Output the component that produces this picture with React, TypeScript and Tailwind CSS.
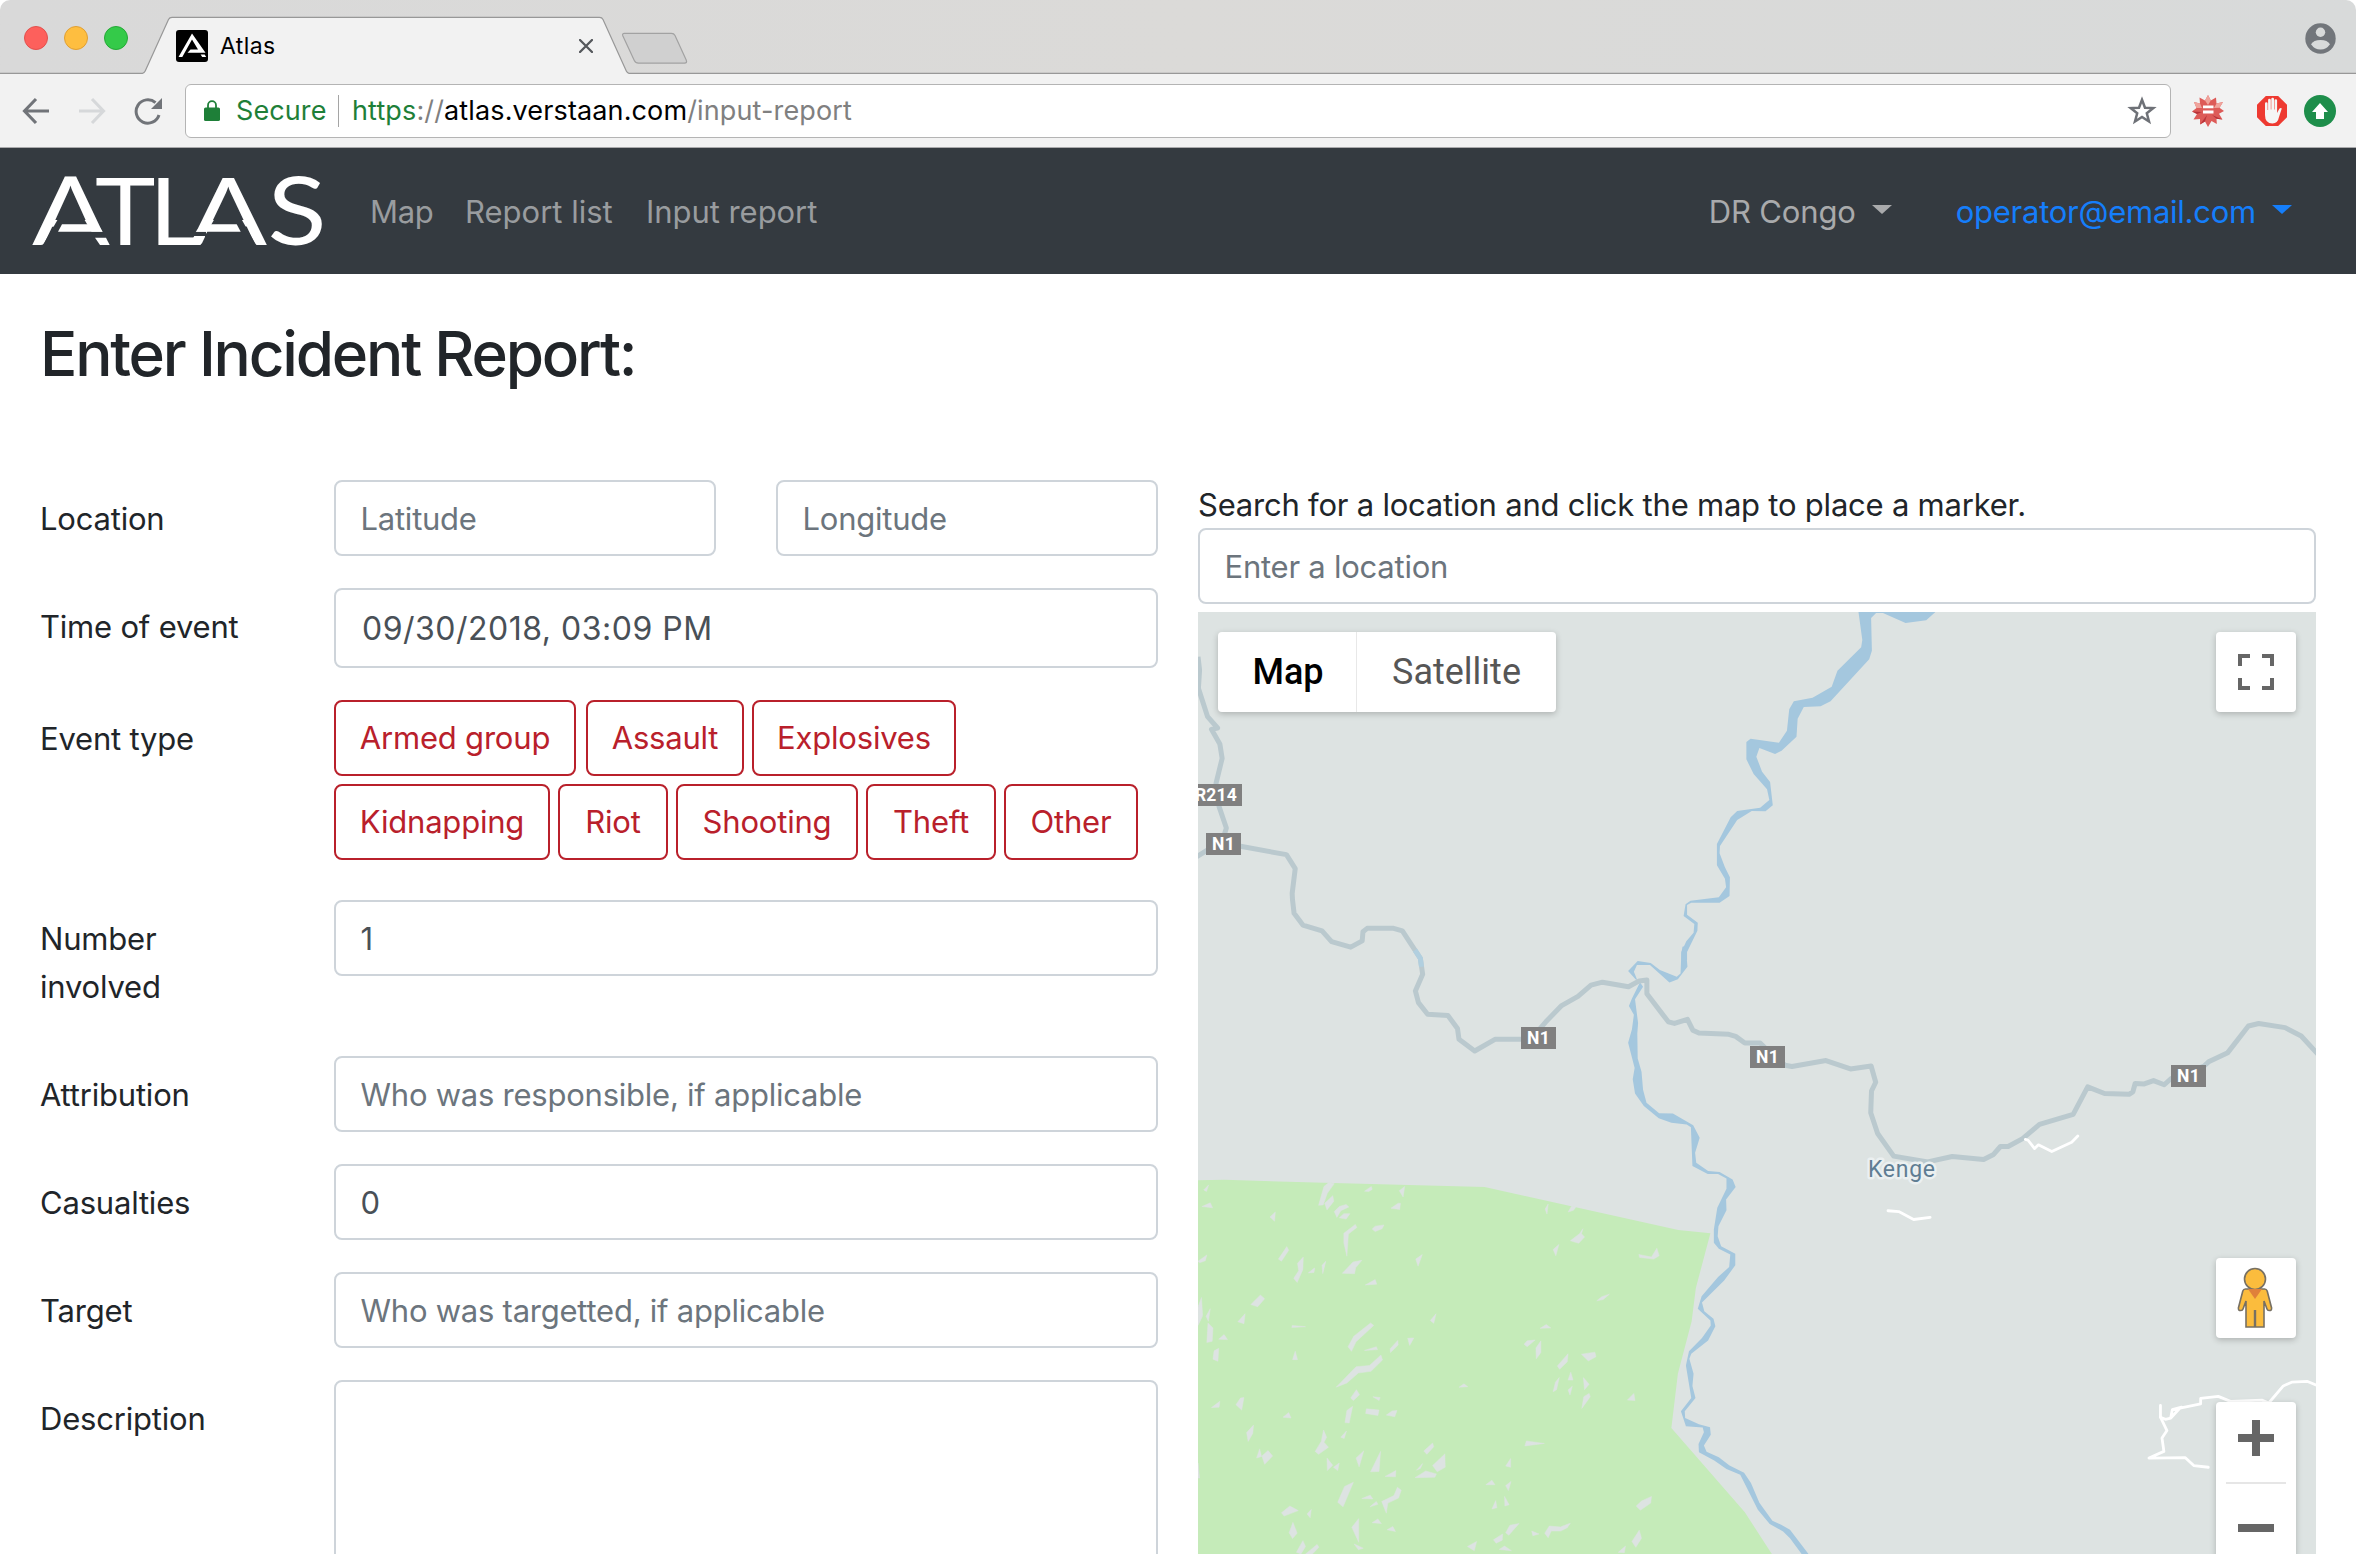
import React from "react";

const field =
  "block w-full h-[76px] rounded-[8px] border-2 border-[#ced4da] bg-white px-[24.5px] text-[31px] tracking-[-0.24px] text-[#495057] placeholder:text-[#6c757d] placeholder:opacity-100 outline-none";

/* ---------- browser chrome ---------- */

function AtlasFavicon() {
  return (
    <svg className="h-8 w-8" viewBox="0 0 32 32">
      <rect width="32" height="32" rx="3" fill="#000" />
      <path d="M2.5 27 16 3.5 29.5 22.7H11.5L14.5 19.6H22L16 9.5 6.3 27Z" fill="#fff" />
      <path d="M24.6 24.4h4L30.2 27h-4Z" fill="#fff" />
    </svg>
  );
}

function TabStrip() {
  return (
    <div className="relative flex h-[74px] w-full shrink-0 items-center rounded-t-[10px] bg-gradient-to-r from-[#d9d9d9] via-[#dbdad8] to-[#d8dada]">
      <svg className="absolute inset-0 h-[74px] w-[2356px]" viewBox="0 0 2356 74">
        <path
          d="M0 73.3H142.5Q144.3 73 145.2 71L168.5 19.5Q169.6 17.4 172 17.4H599.5Q602 17.4 603 19.5L626.3 71Q627.2 73 629 73.3H2356V74H0Z"
          fill="#f2f2f2"
        />
        <path
          d="M0 73.3H142.5Q144.3 73 145.2 71L168.5 19.5Q169.6 17.4 172 17.4H599.5Q602 17.4 603 19.5L626.3 71Q627.2 73 629 73.3H2356"
          fill="none"
          stroke="#989898"
          strokeWidth="1.2"
        />
        <path
          d="M624.5 33.4H671.5Q674 33.4 675 35.5L686.2 60Q687.5 63.2 684.5 63.2H638.5Q635.5 63.2 634.3 60.5L622.9 36Q621.8 33.4 624.5 33.4Z"
          fill="#d0d0d0"
          stroke="#a2a2a2"
          strokeWidth="1.2"
        />
      </svg>
      <div className="relative flex h-full w-full items-center">
        <div className="ml-6 mt-[2px] flex gap-4">
          <span className="h-6 w-6 rounded-full border border-[#e2504d] bg-[#fd605c]" />
          <span className="h-6 w-6 rounded-full border border-[#e09f33] bg-[#febe40]" />
          <span className="h-6 w-6 rounded-full border border-[#24a936] bg-[#34ca49]" />
        </div>
        <div className="ml-[48px] mt-[18px] flex h-8 w-[417px] items-center">
          <AtlasFavicon />
          <span className="ml-3 text-[23px] tracking-[0.4px] text-black">Atlas</span>
          <svg className="ml-auto h-[14px] w-[14px]" viewBox="0 0 14 14">
            <path d="M1 1 13 13M13 1 1 13" stroke="#55585c" strokeWidth="2.3" strokeLinecap="round" />
          </svg>
        </div>
        <svg className="ml-auto mr-[20px] mt-[2px] h-[31px] w-[31px]" viewBox="0 0 31 31">
          <circle cx="15.5" cy="15.5" r="15.2" fill="#72767b" />
          <circle cx="15.5" cy="9.3" r="4.7" fill="#d8dada" />
          <path d="M6 21.3Q8.5 17 15.5 17T25 21.3Q21.5 26.5 15.5 26.5T6 21.3Z" fill="#d8dada" />
        </svg>
      </div>
    </div>
  );
}

function Toolbar() {
  return (
    <div className="flex h-[74px] shrink-0 items-center border-b-[1.5px] border-[#aaaaac] bg-[#f2f2f2]">
      <svg className="ml-[22px] h-[28px] w-[28px]" viewBox="0 0 28 28" fill="none" stroke="#717479" strokeWidth="3.1">
        <path d="M27 14H3M14 2 2.5 14 14 26" />
      </svg>
      <svg className="ml-[28px] h-[28px] w-[28px]" viewBox="0 0 28 28" fill="none" stroke="#d6d8da" strokeWidth="3.1">
        <path d="M1 14H25M14 2 25.5 14 14 26" />
      </svg>
      <svg className="ml-[28px] h-[28px] w-[29px]" viewBox="0 0 29 28">
        <path d="M21.5 5.6A11.7 11.7 0 1 0 25 18" fill="none" stroke="#717479" strokeWidth="3" />
        <path d="M28 1V12H17Z" fill="#717479" />
      </svg>
      <div className="ml-[22px] flex h-[54px] w-[1986px] items-center rounded-[6px] border-[1.5px] border-[#b4b4b4] bg-white">
        <svg className="ml-[18px] h-[21px] w-[16px]" viewBox="0 0 16 21">
          <rect y="7.5" width="16" height="13.5" rx="1.6" fill="#1e7f38" />
          <path d="M4 9V5.2a4 4 0 0 1 8 0V9" fill="none" stroke="#1e7f38" strokeWidth="1.8" />
        </svg>
        <span className="ml-[16px] w-[90px] whitespace-nowrap pt-[2px] text-[27px] tracking-[0.1px] text-[#1e7f38]">Secure</span>
        <span className="ml-[12px] h-8 w-px bg-[#a5a5a5]" />
        <span className="ml-[13px] whitespace-nowrap pt-[2px] text-[27px] tracking-[0.13px] text-[#808080]">
          <span className="text-[#1e7f38]">https</span>://<span className="text-black">atlas.verstaan.com</span>/input-report
        </span>
        <svg className="ml-auto mr-[13px] h-[30px] w-[30px]" viewBox="0 0 30 30">
          <path
            d="M15 3.8 18 11.7 26.3 12.1 19.8 17.3 22 25.5 15 20.9 8 25.5 10.2 17.3 3.7 12.1 12 11.7Z"
            fill="none"
            stroke="#6e7177"
            strokeWidth="2.5"
          />
        </svg>
      </div>
      <svg className="ml-[21px] h-[32px] w-[32px]" viewBox="0 0 32 32">
        <path
          d="M16 0 18.8 5.5 24 2.4 24.5 8.5 31 7 27.5 12.8 32 16 27 18.7 30.5 24.5 24.5 23.8 24.8 29 19.5 26 16 32 13 26.5 8 29.5 8 24 1.5 24.5 5 19 0 16.5 4.5 13 2 7 8 8.5 7.5 2.5 13 5.5Z"
          fill="#dd5b58"
        />
        <path d="M16 0 18.8 5.5 16 10 13 5.5ZM31 7 27.5 12.8 22 13 24.5 8.5ZM2 7 8 8.5 10 13 4.5 13Z" fill="#f0a49c" />
        <path d="M0 16.5 10 17 5 19ZM8 29.5 15 20 13 26.5ZM30.500 24.5 20 20 24.5 23.8Z" fill="#b8343a" />
        <path d="M11 11.8H21.500M11 17H21.5" stroke="#fff" strokeWidth="2.8" />
      </svg>
      <svg className="ml-[33px] h-[30px] w-[30px]" viewBox="0 0 30 30">
        <path d="M8.8 0H21.2L30 8.8V21.2L21.2 30H8.8L0 21.2V8.8Z" fill="#ee3a31" />
        <path
          d="M8 19V7.5a1.3 1.3 0 0 1 2.6 0V14h.5V4a1.3 1.3 0 0 1 2.7 0v9.5h.5V3a1.3 1.3 0 0 1 2.7 0v10.5h.5V4.5a1.3 1.3 0 0 1 2.6 0V17l2.2-4.2q1.6-1.6 2.5-.2L22 21q-1.2 6.5-6.5 6.5Q8 27.5 8 19Z"
          fill="#f5f5f5"
        />
      </svg>
      <svg className="ml-[17px] h-8 w-8" viewBox="0 0 32 32">
        <circle cx="16" cy="16" r="16" fill="#1e8e4b" />
        <path d="M16 8 24 17H20V24H12V17H8Z" fill="#fff" />
      </svg>
    </div>
  );
}

/* ---------- site navigation ---------- */

function AtlasLogo() {
  return (
    <svg className="h-[126px] w-[296px]" viewBox="30 148 296 126" fontFamily="Lato" fontSize="94" fill="#fff">
      <text transform="translate(32 245) scale(1.21 1)">A</text>
      <path d="M71 196.7 94 236 94 246H42.3Z" fill="#343a40" />
      <path d="M90 231.7H112V246H90Z" fill="#343a40" />
      <path d="M62 224.3H88L95 220 102.7 231.7H58Z" />
      <path d="M95 237.7H106L109.7 245H100Z" />
      <text transform="translate(95 245) scale(1.09 1)">T</text>
      <text transform="translate(149 245) scale(1.1 1)">L</text>
      <text transform="translate(189.5 245) scale(1.22 1)">A</text>
      <path d="M227.7 195 256.7 246H205V236Z" fill="#343a40" />
      <path d="M188 231.7H206V236H188Z" fill="#343a40" />
      <path d="M202 224.3H236.7L240.7 231.7H195.7Z" />
      <text transform="translate(267.5 245) scale(1.16 1)">S</text>
    </svg>
  );
}

function Caret() {
  return <span className="ml-4 mb-[6px] h-0 w-0 border-x-[10px] border-t-[9px] border-x-transparent border-t-current" />;
}

function Navbar() {
  return (
    <nav className="flex h-[126px] shrink-0 items-center bg-[#343a40] pl-[30px] pr-[64px] text-[31px] text-[#999c9f]">
      <AtlasLogo />
      <div className="ml-[44px] flex gap-8 pt-[3px]">
        <a className="w-[63px] whitespace-nowrap tracking-[-0.3px]">Map</a>
        <a className="w-[149px] whitespace-nowrap">Report list</a>
        <a className="whitespace-nowrap tracking-[-0.05px]">Input report</a>
      </div>
      <div className="ml-auto flex items-center gap-16 pt-[3px]">
        <a className="flex items-center tracking-[-0.15px] text-[#a9aaac]">
          DR Congo
          <Caret />
        </a>
        <a className="flex items-center tracking-[-0.25px] text-[#157efb]">
          operator@email.com
          <Caret />
        </a>
      </div>
    </nav>
  );
}

/* ---------- form ---------- */

function Row({ label, className, children }: { label: string; className: string; children: React.ReactNode }) {
  return (
    <div className={"flex " + className}>
      <label className="w-[294px] shrink-0 pt-[15px] leading-[48px] tracking-[-0.2px] whitespace-pre">{label}</label>
      <div className="w-[824px]">{children}</div>
    </div>
  );
}

function TypeButton({ w, children }: { w: string; children: string }) {
  return (
    <button
      className={
        "flex h-[76px] items-center justify-center rounded-[8px] border-2 border-[#b9202b] pt-px text-[31px] tracking-[-0.2px] whitespace-nowrap text-[#b9202b] " +
        w
      }
    >
      {children}
    </button>
  );
}

function ReportForm() {
  return (
    <form className="w-[1118px]">
      <Row label="Location" className="mb-8">
        <div className="flex justify-between">
          <div className="w-[382px]">
            <input className={field} placeholder="Latitude" />
          </div>
          <div className="w-[382px]">
            <input className={field} placeholder="Longitude" />
          </div>
        </div>
      </Row>
      <Row label="Time of event" className="mb-8">
        <div className="flex h-20 items-center rounded-[8px] border-2 border-[#ced4da] bg-white px-[26px] pt-[2px] text-[32px] tracking-[0.5px] text-[#495057]">
          09/30/2018, 03:09 PM
        </div>
      </Row>
      <Row label="Event type" className="mb-10">
        <div className="flex">
          <TypeButton w="w-[242px]">Armed group</TypeButton>
          <TypeButton w="w-[158px] ml-[10px]">Assault</TypeButton>
          <TypeButton w="w-[204px] ml-2">Explosives</TypeButton>
        </div>
        <div className="mt-2 flex gap-2">
          <TypeButton w="w-[216px]">Kidnapping</TypeButton>
          <TypeButton w="w-[110px]">Riot</TypeButton>
          <TypeButton w="w-[182px]">Shooting</TypeButton>
          <TypeButton w="w-[130px]">Theft</TypeButton>
          <TypeButton w="w-[134px]">Other</TypeButton>
        </div>
      </Row>
      <Row label={"Number\ninvolved"} className="h-[156px]">
        <input className={field} defaultValue="1" />
      </Row>
      <Row label="Attribution" className="mb-8">
        <input className={field} placeholder="Who was responsible, if applicable" />
      </Row>
      <Row label="Casualties" className="mb-8">
        <input className={field} defaultValue="0" />
      </Row>
      <Row label="Target" className="mb-8">
        <input className={field} placeholder="Who was targetted, if applicable" />
      </Row>
      <Row label="Description" className="">
        <textarea className="block h-[248px] w-full resize-none rounded-[8px] border-2 border-[#ced4da] outline-none" />
      </Row>
    </form>
  );
}

/* ---------- map ---------- */

const clearings =
  "M36 695 49 683 43 699ZM31 735 53 726 59 738ZM209 760 223 748 221 770ZM336 732 350 687 362 678 377 680 359 703 348 731ZM352 727 373 709 376 722 358 743ZM377 747 390 735 408 730 415 736 394 745 384 761ZM390 762 402 752 418 752 408 765ZM456 698 474 687 476 694 467 699ZM547 697 561 687 557 712ZM525 739 544 727 550 727 548 742ZM476 789 484 782 507 779 502 788 484 795ZM402 799 432 778 436 785 414 801 410 854 402 822ZM231 861 253 831 258 840 239 866ZM21 866 44 851 40 865 25 870ZM281 871 296 856 295 886 280 917 271 907 284 889ZM309 894 326 882 324 893ZM345 876 355 866 347 896ZM398 895 426 868 449 864 433 882 430 896ZM590 861 607 850 596 878ZM458 923 484 910 488 921ZM159 970 184 947 195 956 177 975ZM125 1011 144 992 141 1016ZM21 975 30 953 33 997 21 1020ZM42 998 53 980 48 1010ZM47 1014 60 1026 58 1058 44 1061ZM75 1053 89 1042 98 1054ZM63 1081 75 1075 73 1106 60 1101ZM267 1020 302 1023 266 1025ZM268 1102 275 1082 281 1102ZM413 1071 428 1046 472 1014 480 1020 434 1059 422 1082ZM456 1080 487 1071 490 1078ZM523 1076 543 1056 544 1067 524 1085ZM569 1051 585 1050 574 1068ZM628 1008 643 992 637 1015ZM382 1168 434 1119 469 1116 499 1091 503 1103 473 1130 440 1134 410 1158ZM420 1194 435 1174 443 1186 427 1200ZM478 1191 497 1193 494 1200ZM461 1220 494 1223 491 1236 459 1231ZM513 1235 528 1225 541 1224 535 1239ZM405 1253 410 1224 425 1214 416 1254ZM394 1288 409 1273 403 1291ZM56 1217 78 1202 76 1216ZM120 1210 132 1194 141 1193 135 1223ZM243 1240 258 1229 264 1242ZM148 1277 166 1259 164 1279 152 1298ZM174 1338 182 1316 187 1334ZM188 1333 204 1320 216 1333 195 1353ZM327 1322 343 1298 349 1271 357 1288 350 1300 362 1312 336 1329ZM358 1338 373 1355 359 1368ZM375 1360 390 1350 386 1368ZM434 1338 454 1321 442 1359ZM472 1371 498 1322 494 1370ZM510 1382 538 1368 537 1383ZM611 1321 634 1302 637 1311 619 1329ZM592 1367 608 1351 602 1363ZM634 1356 666 1328 667 1360 646 1371ZM588 1385 616 1369 644 1376 640 1384ZM386 1444 404 1406 427 1396 400 1455ZM449 1435 471 1427 478 1436ZM470 1455 487 1442 491 1449ZM501 1442 533 1428 542 1408 552 1415 545 1434 517 1446 513 1470ZM239 1469 261 1453 283 1464 246 1477ZM306 1472 317 1461 314 1481ZM259 1517 269 1492 280 1518 268 1531ZM423 1504 441 1483 441 1540ZM476 1493 491 1484 500 1495ZM515 1510 530 1502 537 1514ZM278 1564 295 1536 302 1550 290 1568ZM302 1568 332 1545 337 1552 320 1568ZM429 1544 453 1554 440 1558ZM703 1168 716 1160 726 1167ZM915 1027 931 1018 943 1026ZM873 1065 881 1057 902 1055 881 1071ZM904 1074 917 1057 917 1085 905 1100ZM960 1117 988 1088 986 1107 966 1125ZM1023 1089 1058 1084 1061 1095 1041 1105ZM949 1179 955 1156 965 1145 958 1174ZM988 1151 995 1132 1001 1151ZM988 1175 999 1166 993 1187ZM1028 1145 1043 1161 1031 1174ZM1024 1219 1029 1191 1043 1183 1046 1191ZM1143 1199 1160 1183 1163 1200ZM1063 961 1076 951 1096 945 1080 958ZM1173 850 1206 856 1220 835 1226 853 1212 861 1175 857ZM994 817 1018 800 1027 788 1023 800 1031 808 1016 823ZM949 838 964 826 956 853ZM928 741 936 729 933 753ZM988 748 998 733 1008 737 1002 744ZM875 1309 879 1297 926 1303ZM825 1357 838 1339 838 1360ZM773 1402 789 1391 797 1402ZM825 1404 839 1394 832 1416ZM822 1430 834 1450 823 1453ZM789 1460 799 1440 802 1457ZM725 1550 749 1538 743 1560ZM793 1534 817 1520 816 1535 800 1542ZM825 1517 836 1499 860 1495 833 1523ZM893 1513 912 1520 896 1524ZM927 1518 939 1501 968 1503 994 1494 986 1505 969 1513 944 1513 936 1529ZM1166 1453 1180 1441 1206 1430 1204 1446 1177 1463ZM1155 1538 1174 1511 1180 1530 1165 1552ZM1119 1564 1138 1549 1135 1565ZM808 1557 822 1549 840 1560ZM21 1350 25 1386 21 1386Z";

const shields = [
  { x: 1190, y: 784, w: 52, label: "R214" },
  { x: 1206, y: 833, w: 35, label: "N1" },
  { x: 1521, y: 1027, w: 35, label: "N1" },
  { x: 1750, y: 1046, w: 35, label: "N1" },
  { x: 2171, y: 1065, w: 35, label: "N1" },
];

function MapCanvas() {
  return (
    <svg className="absolute inset-0 h-[942px] w-[1118px]" viewBox="1198 612 1118 942">
      <g transform="translate(1190 900) scale(.38265 .41709)">
        <path
          d="M21 672 90 671 350 678 770 688 1276 791 1360 799 1322 930 1311 1010 1275 1136 1258 1266 1450 1468 1522 1570H21Z"
          fill="#c5ebb9"
        />
        <path d={clearings} fill="#dde3e2" stroke="#dde3e2" strokeWidth="1.2" />
        <path
          d="M1287 112 1284 128 1282 176 1272 184 1228 168 1204 151 1170 146 1145 170 1166 192 1168 190 1160 172 1168 156 1202 156 1253 198 1275 190 1300 160 1297 126 1303 108Z"
          fill="#a4c7de"
        />
        <path
          d="M1176 197 1155 236 1147 254 1160 275 1155 310 1145 342 1162 403 1157 430 1163 464 1186 494 1225 523 1258 534 1298 538 1309 545 1313 638 1353 657 1380 657 1402 668 1402 692 1378 738 1369 790 1369 822 1382 836 1412 850 1409 880 1380 904 1337 950 1327 980 1360 1008 1361 1020 1338 1050 1304 1082 1296 1116 1310 1194 1283 1226 1296 1262 1340 1265 1343 1276 1329 1304 1330 1324 1370 1344 1402 1364 1438 1378 1484 1462 1515 1496 1550 1514 1568 1530 1600 1570 1618 1570 1568 1510 1545 1498 1522 1488 1488 1445 1466 1398 1448 1373 1410 1356 1382 1336 1350 1323 1343 1308 1361 1282 1359 1264 1330 1257 1294 1242 1293 1226 1321 1194 1313 1165 1316 1136 1305 1100 1310 1088 1354 1056 1373 1022 1368 1004 1344 986 1338 965 1396 912 1425 876 1425 848 1388 830 1379 806 1381 782 1402 744 1401 718 1426 688 1418 670 1384 652 1354 650 1323 630 1320 606 1332 570 1315 540 1262 512 1226 511 1193 486 1184 455 1180 412 1170 380 1169 320 1171 295 1163 238 1184 208Z"
          fill="#a4c7de"
        />
      </g>
      <g transform="translate(1190 460) scale(.38265 .33333)">
        <path
          d="M1747 456 1757 540 1754 562 1692 632 1677 680 1627 713 1578 724 1566 748 1560 812 1539 848 1465 836 1454 846 1454 898 1473 942 1508 988 1514 1020 1490 1043 1430 1053 1413 1072 1377 1152 1377 1216 1398 1256 1401 1282 1382 1312 1308 1322 1295 1333 1290 1368 1318 1392 1316 1418 1297 1444 1284 1476 1284 1500 1299 1500 1299 1476 1326 1412 1327 1388 1299 1364 1299 1335 1310 1328 1384 1328 1410 1308 1411 1252 1398 1222 1384 1180 1385 1158 1430 1080 1468 1053 1504 1054 1523 1036 1516 966 1495 935 1480 890 1488 864 1529 882 1546 872 1585 830 1588 776 1604 741 1648 739 1674 724 1775 598 1782 572 1780 474 1793 459 1811 459 1870 489 1924 481 1948 456Z"
          fill="#a4c7de"
        />
        <g fill="none" stroke="#bac9ce" strokeWidth="5" strokeLinejoin="round">
          <path vectorEffect="non-scaling-stroke" d="M21 590 25 630 22 685 46 770 72 804 56 808 78 852 84 895 68 970 76 1040 95 1104 88 1130" />
          <path vectorEffect="non-scaling-stroke" d="M18 1190 60 1160 132 1159 252 1184 275 1226 267 1300 268 1322" />
        </g>
      </g>
      <g transform="translate(1190 900) scale(.38265 .41709)" fill="none" strokeLinejoin="round">
        <path
          vectorEffect="non-scaling-stroke"
          stroke="#bac9ce"
          strokeWidth="5"
          d="M268 0 272 32 295 60 345 74 370 100 420 113 450 98 452 76 463 68H532L555 74 602 140 608 178 589 218 597 246 621 274 674 277 699 308 703 334 744 362 797 334H890L930 292 970 254 1014 231 1048 204 1078 197 1146 208 1174 194 1194 192V225L1250 292 1266 296 1300 286 1314 312 1330 319 1408 322 1426 327 1450 343H1490L1520 370 1555 396 1573 399 1662 385 1726 405 1780 398 1792 437 1781 458 1779 510 1797 560 1839 614 1928 628 1992 615 2074 622 2100 610 2118 591H2138L2176 572 2220 538 2308 514 2346 448 2390 464 2454 466 2464 460 2470 440 2494 441 2518 433 2546 443 2564 428 2650 398 2662 388 2712 366 2766 302 2793 296 2862 306 2904 326 2950 372"
        />
        <path vectorEffect="non-scaling-stroke" stroke="#b1cfdf" strokeWidth="5" d="M588 120 602 140 605 160" />
      </g>
      <g
        transform="translate(1756 900) scale(.38265 .41709)"
        fill="none"
        stroke="#fff"
        strokeWidth="2.8"
        strokeLinejoin="round"
        strokeLinecap="round"
      >
        <path vectorEffect="non-scaling-stroke" d="M704 574 711 576 728 596 738 587 773 603 825 581 841 566M345 745 373 747 412 766 455 761" />
        <path vectorEffect="non-scaling-stroke" d="M1057 1212V1240L1074 1272 1061 1290 1066 1322 1027 1338 1122 1337 1144 1356 1182 1360" />
        <path
          vectorEffect="non-scaling-stroke"
          d="M1057 1240 1070 1245 1084 1242 1108 1218 1162 1208V1195L1208 1190 1240 1202 1322 1199 1340 1206 1378 1165 1400 1156 1440 1154 1466 1164M1084 1240 1088 1222 1112 1216"
        />
      </g>
      <g fontFamily="Roboto" fontWeight="700" fontSize="17.5" fill="#fff">
        {shields.map((s) => (
          <g key={s.x}>
            <rect x={s.x} y={s.y} width={s.w} height="22" fill="#808080" />
            <text x={s.x + s.w / 2} y={s.y + 17} textAnchor="middle" letterSpacing=".2">
              {s.label}
            </text>
          </g>
        ))}
      </g>
      <text
        x="1868"
        y="1176.5"
        fontFamily="Roboto"
        fontSize="23"
        letterSpacing=".7"
        fill="#5f7d93"
        stroke="#ebf0f1"
        strokeWidth="5"
        strokeLinejoin="round"
        paintOrder="stroke"
      >
        Kenge
      </text>
    </svg>
  );
}

const control = "absolute right-5 w-20 rounded-[4px] bg-white shadow-[0_2px_6px_rgba(0,0,0,0.22)]";

function MapPanel() {
  return (
    <section className="w-[1118px]">
      <p className="h-12 pt-px text-[31px] leading-[48px] tracking-[-0.22px] whitespace-nowrap">
        Search for a location and click the map to place a marker.
      </p>
      <input className={field} placeholder="Enter a location" />
      <div className="relative mt-2 h-[942px] overflow-hidden bg-[#dde3e2]">
        <MapCanvas />
        <div className="absolute left-5 top-5 flex h-20 items-center rounded-[4px] bg-white font-[Roboto] text-[36px] shadow-[0_2px_6px_rgba(0,0,0,0.22)]">
          <span className="flex h-full w-[139px] items-center justify-center border-r border-[#e8e8e8] pl-[2px] font-medium text-black">
            Map
          </span>
          <span className="w-[199px] text-center text-[#565656]">Satellite</span>
        </div>
        <div className={control + " top-5 flex h-20 items-center justify-center"}>
          <svg className="h-9 w-9" viewBox="0 0 36 36" fill="none" stroke="#666" strokeWidth="4">
            <path d="M2 12V2H12M24 2H34V12M34 24V34H24M12 34H2V24" />
          </svg>
        </div>
        <div className={control + " top-[646px] flex h-20 items-center justify-center"}>
          <svg className="mr-[3px] h-[62px] w-[36px]" viewBox="0 0 36 62">
            <g fill="#fbbc3d" stroke="#777063" strokeWidth="1.6">
              <path d="M8.5 22H27.5Q29.5 22 30.2 24L34.6 41Q34.8 44 32 43.5 30.5 43.5 30 42L27 34V60H9V34L6 42Q5.5 43.5 4 43.5 1.2 44 1.4 41L5.8 24Q6.5 22 8.5 22Z" />
              <circle cx="18" cy="12" r="10.5" />
            </g>
            <path d="M11 22H25L18 32Z" fill="#e0803a" />
            <path d="M18 43V60" stroke="#777063" strokeWidth="2.4" />
          </svg>
        </div>
        <div className={control + " top-[790px] flex h-[162px] flex-col items-center"}>
          <svg className="mt-[18px] h-9 w-9" viewBox="0 0 36 36">
            <path d="M0 14H14V0H22V14H36V22H22V36H14V22H0Z" fill="#666" />
          </svg>
          <span className="mt-[26px] h-[2px] w-[60px] bg-[#e6e6e6]" />
          <span className="mt-[40px] h-2 w-9 bg-[#666]" />
        </div>
      </div>
    </section>
  );
}

export default function App() {
  return (
    <div className="flex h-[1554px] w-[2356px] flex-col overflow-hidden bg-white font-[Inter,sans-serif] text-[31px] text-[#212529]">
      <TabStrip />
      <Toolbar />
      <Navbar />
      <main className="h-[1280px] shrink-0 overflow-hidden px-10">
        <h2 className="h-[206px] pt-[41px] text-[62px] leading-[78px] font-medium tracking-[-2.2px]">Enter Incident Report:</h2>
        <div className="flex justify-between">
          <ReportForm />
          <MapPanel />
        </div>
      </main>
    </div>
  );
}
